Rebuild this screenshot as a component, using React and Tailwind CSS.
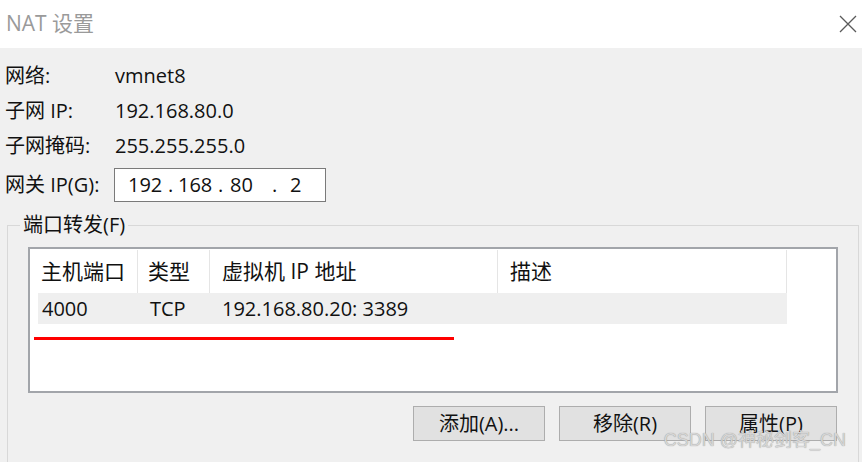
const fields = [
  { label: '网络:', value: 'vmnet8', h: 'h-[36px]' },
  { label: '子网 IP:', value: '192.168.80.0', h: 'h-[34px]' },
  { label: '子网掩码:', value: '255.255.255.0', h: 'h-[36px]' },
]

const columns = [
  { label: '主机端口', cls: 'w-[108px] pl-[11px]' },
  { label: '类型', cls: 'w-[72px] pl-[10px]' },
  { label: '虚拟机 IP 地址', cls: 'w-[288px] pl-[12px]' },
  { label: '描述', cls: 'w-[289px] pl-[12px]' },
]

function CloseIcon() {
  return (
    <svg width="18" height="18" viewBox="0 0 18 18" className="text-[#5a5a5a]">
      <path d="M1 1 L17 17 M17 1 L1 17" stroke="currentColor" strokeWidth="1.3" fill="none" />
    </svg>
  )
}

function Button({ children }) {
  return (
    <button className="flex h-[35px] w-[132px] items-center justify-center border border-[#adadad] bg-[#e1e1e1] text-[20px] text-[#111]">
      {children}
    </button>
  )
}

export default function App() {
  return (
    <div className="relative h-[462px] w-[862px] overflow-hidden bg-[#f0f0f0] font-['Open_Sans','Noto_Sans_CJK_SC',sans-serif] text-[20px] text-[#111]">
      <div className="flex h-[48px] items-center justify-between bg-white pl-[6px] pr-[5px]">
        <span className="text-[21px] text-[#9a9a9a]">NAT 设置</span>
        <CloseIcon />
      </div>

      <div className="pt-[10px]">
        {fields.map((f) => (
          <div key={f.label} className={`flex items-center pl-[5px] ${f.h}`}>
            <span className="w-[110px]">{f.label}</span>
            <span>{f.value}</span>
          </div>
        ))}

        <div className="mt-[4px] flex h-[34px] items-center pl-[5px]">
          <span className="w-[109px]">网关 IP(G):</span>
          <div className="flex h-full w-[212px] items-center border border-[#7a7a7a] bg-white pl-[13px]">
            <span className="w-[40px]">192</span>
            <span className="w-[10px]">.</span>
            <span className="w-[40px]">168</span>
            <span className="w-[12px]">.</span>
            <span className="w-[40px]">80</span>
            <span className="w-[20px] pl-[2px]">.</span>
            <span>2</span>
          </div>
        </div>

        <fieldset className="ml-[7px] mt-[12px] h-[300px] w-[852px] border border-[#d8d8d8] px-0 pb-0 pt-0">
          <legend className="ml-[12px] px-[3px] leading-[22px]">端口转发(F)</legend>

          <div className="relative ml-[20px] mt-[11px] h-[146px] w-[810px] border-2 border-[#a2a5aa] bg-white pt-[1px]">
            <div className="flex h-[43px] text-[21px]">
              {columns.map((c) => (
                <div key={c.label} className={`flex items-center border-r border-[#e5e5e5] ${c.cls}`}>
                  {c.label}
                </div>
              ))}
            </div>
            <div className="ml-[8px] flex h-[31px] w-[749px] items-center bg-[#efefef]">
              <span className="w-[100px] pl-[4px]">4000</span>
              <span className="w-[72px] pl-[12px]">TCP</span>
              <span className="pl-[12px]">192.168.80.20: 3389</span>
            </div>
            <div className="absolute left-[4px] top-[88px] h-[3px] w-[420px] bg-[#ff0000]" />
          </div>

          <div className="mr-[21px] mt-[13px] flex justify-end gap-[14px]">
            <Button>添加(A)...</Button>
            <Button>移除(R)</Button>
            <Button>属性(P)</Button>
          </div>
        </fieldset>
      </div>

      <div className="absolute bottom-[8px] right-[16px] font-['Liberation_Sans','Noto_Sans_CJK_SC',sans-serif] text-[18px] text-[#d6d6d6] [text-shadow:0_0_1px_#8a8a8a]">
        CSDN @神秘剑客_CN
      </div>
    </div>
  )
}
